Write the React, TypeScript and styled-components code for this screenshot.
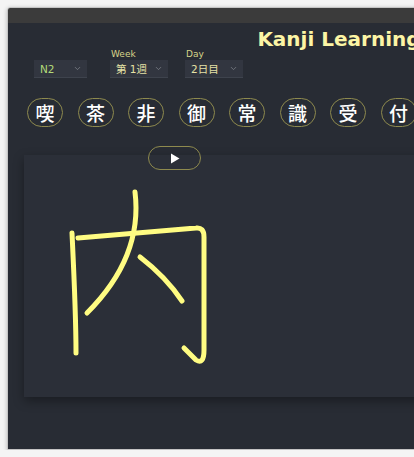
import styled, { createGlobalStyle } from 'styled-components';
import { ChevronDown } from 'lucide-react';

const GlobalStyle = createGlobalStyle`
  html, body {
    margin: 0;
    padding: 0;
    background: #f4f4f4;
    overflow: hidden;
  }
  body {
    font-family: 'DejaVu Sans', 'Noto Sans CJK JP', sans-serif;
  }
`;

const Page = styled.div`
  padding: 7px 0 0 7px;
  width: 720px;
`;

const Window = styled.div`
  width: 662px;
  border: 1px solid #c4c4c4;
  border-radius: 3px 3px 0 0;
  box-shadow: 0 1px 4px rgba(0, 0, 0, 0.25);
  overflow: hidden;
`;

const TitleBar = styled.div`
  height: 15px;
  background: #3b3b3b;
`;

const Content = styled.div`
  height: 426px;
  background: #282c34;
  display: flex;
  flex-direction: column;
`;

const Title = styled.h1`
  margin: 5px 0 0;
  font-size: 20px;
  line-height: 22px;
  font-weight: 700;
  color: #fcf5a5;
  text-align: center;
`;

const Controls = styled.div`
  display: flex;
  align-items: flex-end;
  padding-left: 26px;
  height: 28px;
`;

const Field = styled.div<{ $width: number; $gap: number }>`
  width: ${({ $width }) => $width}px;
  margin-left: ${({ $gap }) => $gap}px;
  display: flex;
  flex-direction: column;
`;

const Label = styled.span`
  font-size: 9px;
  line-height: 9px;
  color: #d6d48a;
  margin-bottom: 1px;
  padding-left: 1px;
`;

const Select = styled.div<{ $color: string }>`
  height: 17px;
  background: #323640;
  border-bottom: 1px solid #3e434d;
  display: flex;
  align-items: center;
  justify-content: space-between;
  padding: 0 5px 0 6px;
  font-size: 10.5px;
  color: ${({ $color }) => $color};
  font-family: 'DejaVu Sans', 'Noto Sans CJK JP', sans-serif;
  svg {
    color: #80848c;
  }
`;

const Chips = styled.div`
  display: flex;
  gap: 14.5px;
  padding-left: 19px;
  margin-top: 20px;
`;

const Chip = styled.div`
  flex: none;
  width: 36px;
  height: 29px;
  box-sizing: border-box;
  border: 1.5px solid #8e8a4e;
  border-radius: 15px;
  display: flex;
  align-items: center;
  justify-content: center;
  color: #ffffff;
  font-size: 19px;
  font-weight: 500;
  font-family: 'Noto Sans CJK JP', sans-serif;
`;

const PlayRow = styled.div`
  padding-left: 140px;
  margin-top: 19px;
  position: relative;
  z-index: 1;
`;

const PlayButton = styled.button`
  width: 53px;
  height: 24px;
  border: 1.5px solid #8e8a4e;
  border-radius: 12px;
  background: transparent;
  display: flex;
  align-items: center;
  justify-content: center;
  padding: 0;
  color: #ffffff;
`;

const Card = styled.div`
  margin: -15px 0 0 16px;
  width: 620px;
  height: 242px;
  background: #2b2f38;
  box-shadow: 0 4px 10px rgba(0, 0, 0, 0.35);
`;

const kanjiList = ['喫', '茶', '非', '御', '常', '識', '受', '付', '入', '内'];

// stroke order of 内, in card coordinates
const strokes = [
  'M48 78 C50 120 52 160 52 198',
  'M54 83 L172 73 Q180 72 180 82 L180 195 Q180 210 172 205 L160 193',
  'M111 37 Q119 102 63 158',
  'M116 102 Q142 122 158 146',
];

const App = () => (
  <Page>
    <GlobalStyle />
    <Window>
      <TitleBar />
      <Content>
        <Title>Kanji Learning</Title>
        <Controls>
          <Field $width={53} $gap={0}>
            <Select $color="#b3da78">
              N2
              <ChevronDown size={9} strokeWidth={2} />
            </Select>
          </Field>
          <Field $width={58} $gap={23}>
            <Label>Week</Label>
            <Select $color="#e6e2a6">
              第 1週
              <ChevronDown size={9} strokeWidth={2} />
            </Select>
          </Field>
          <Field $width={58} $gap={17}>
            <Label>Day</Label>
            <Select $color="#e6e2a6">
              2日目
              <ChevronDown size={9} strokeWidth={2} />
            </Select>
          </Field>
        </Controls>
        <Chips>
          {kanjiList.map((k) => (
            <Chip key={k}>{k}</Chip>
          ))}
        </Chips>
        <PlayRow>
          <PlayButton>
            <svg width="10" height="11" viewBox="0 0 10 11">
              <path d="M1 0.5 L9.5 5.5 L1 10.5 Z" fill="#ffffff" />
            </svg>
          </PlayButton>
        </PlayRow>
        <Card>
          <svg width="260" height="242" viewBox="0 0 260 242">
            {strokes.map((d) => (
              <path
                key={d}
                d={d}
                fill="none"
                stroke="#fffc82"
                strokeWidth={5}
                strokeLinecap="round"
                strokeLinejoin="round"
              />
            ))}
          </svg>
        </Card>
      </Content>
    </Window>
  </Page>
);

export default App;
